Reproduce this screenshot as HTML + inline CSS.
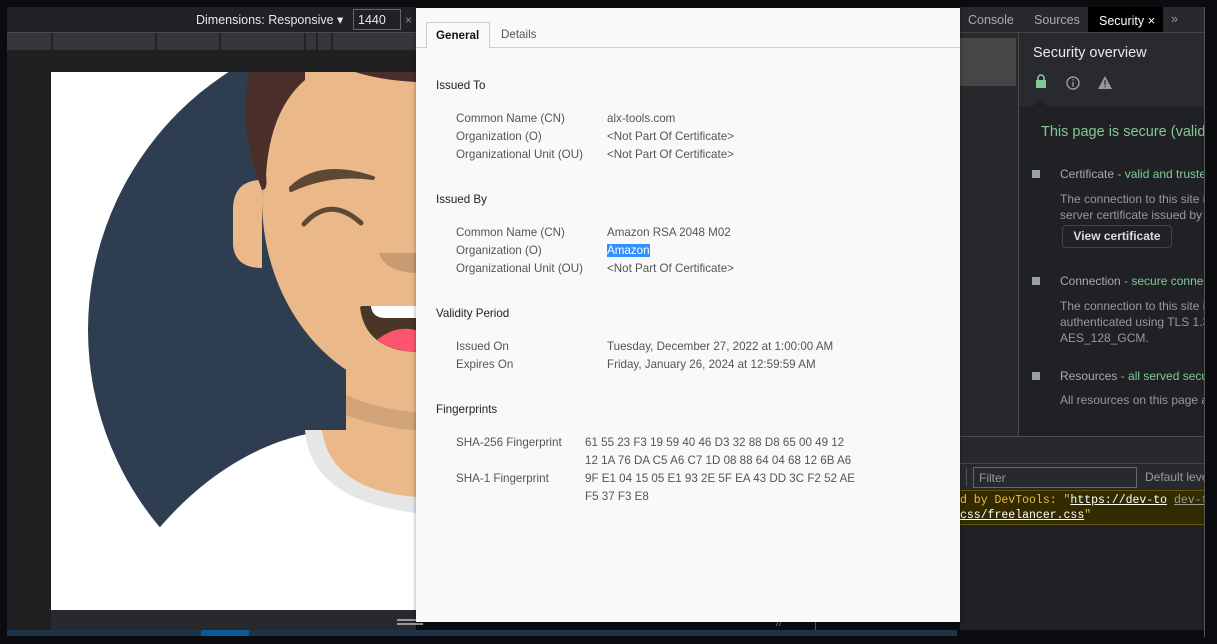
<!DOCTYPE html>
<html><head><meta charset="utf-8"><style>
*{margin:0;padding:0;box-sizing:border-box}
body{width:1217px;height:644px;background:#0a0c10;position:relative;overflow:hidden;font-family:"Liberation Sans",sans-serif}
.a{position:absolute}
.dlg{left:416px;top:8px;width:544px;height:614px;background:#f9f9f9;box-shadow:0 0 4px rgba(0,0,0,.4);font-size:11.6px;color:#555}
.dlg .row{position:absolute;white-space:nowrap}
.h{color:#222}
.sp{font-family:"Liberation Sans",sans-serif;font-size:12.5px}
</style></head><body>
<div class="a" style="left:7px;top:7px;width:409px;height:623px;background:#1f1f21"></div>
<div class="a" style="left:7px;top:7px;width:409px;height:25px;background:#202124"></div>
<div class="a" style="left:196px;top:12px;color:#e8e8e8;font-size:12.5px">Dimensions: Responsive ▾</div>
<div class="a" style="left:353px;top:9px;width:48px;height:21px;border:1px solid #666;background:#202124;color:#e8e8e8;font-size:12.5px;padding:3px 4px">1440</div>
<div class="a" style="left:405px;top:13px;color:#888;font-size:12px">×</div>
<div class="a" style="left:7px;top:32px;width:409px;height:1px;background:#4a4a4c"></div>
<div class="a" style="left:7px;top:33px;width:409px;height:17px;background:#35363a"></div>
<div class="a" style="left:51px;top:33px;width:2px;height:17px;background:#222"></div>
<div class="a" style="left:155px;top:33px;width:2px;height:17px;background:#222"></div>
<div class="a" style="left:219px;top:33px;width:2px;height:17px;background:#222"></div>
<div class="a" style="left:304px;top:33px;width:2px;height:17px;background:#222"></div>
<div class="a" style="left:316px;top:33px;width:2px;height:17px;background:#222"></div>
<div class="a" style="left:331px;top:33px;width:2px;height:17px;background:#222"></div>
<div class="a" style="left:51px;top:610px;width:365px;height:20px;background:#28292c"></div>
<div class="a" style="left:7px;top:630px;width:950px;height:6px;background:#1d3347"></div>
<div class="a" style="left:201px;top:630px;width:48px;height:6px;background:#0e5a98"></div>
<svg class="a" style="left:51px;top:72px" width="365" height="538" viewBox="51 72 365 538">
<rect x="51" y="72" width="365" height="538" fill="#fff"/>
<circle cx="395" cy="330" r="307" fill="#2e3e50"/>
<path d="M110 600 C170 490 260 430 346 430 L416 430 L416 610 L100 610 Z" fill="#fff"/>
<path d="M305 430 Q310 500 416 513 L416 497 Q330 490 322 430 Z" fill="#e6e6e6"/>
<rect x="346" y="370" width="70" height="80" fill="#ebb889"/>
<path d="M322 430 Q330 490 416 497 L416 430 Z" fill="#ebb889"/>
<path d="M346 395 Q380 410 416 412 L416 430 Q380 428 346 415 Z" fill="#d2a479"/>
<ellipse cx="430" cy="200" rx="168" ry="196" fill="#ebb889"/>
<path d="M262 180 Q233 180 233 210 L233 245 Q235 268 262 268 Z" fill="#ebb889"/>
<path d="M305 72 L249 72 Q238 130 262 190 Q268 190 266 175 Q270 110 305 80 Z" fill="#4a2e2a"/>
<path d="M355 72 Q380 80 416 82 L416 72 Z" fill="#4a2e2a"/>
<path d="M291 188 Q320 160 373 178 Q330 172 291 190 Z" fill="#5e4834" stroke="#5e4834" stroke-width="4" stroke-linejoin="round"/>
<path d="M304 224 Q330 195 361 223" fill="none" stroke="#5e4834" stroke-width="5" stroke-linecap="round"/>
<path d="M379 253 Q385 272 416 273 L416 253 Z" fill="#c99b72"/>
<path d="M360 307 Q365 350 416 352 L416 306 L362 306 Z" fill="#4a3626"/>
<path d="M371 307 Q373 318 385 318 L416 318 L416 306 L371 306 Z" fill="#fff"/>
<path d="M377 340 Q395 325 416 330 L416 352 Q390 350 377 340 Z" fill="#fe546d"/>
</svg>
<div class="a" style="left:397px;top:619px;width:26px;height:2px;background:#999"></div>
<div class="a" style="left:397px;top:623px;width:26px;height:2px;background:#999"></div>
<div class="a" style="left:776px;top:617px;color:#777;font-size:11px">//</div>
<div class="a" style="left:815px;top:622px;width:1px;height:8px;background:#555"></div>

<div class="a" style="left:960px;top:7px;width:245px;height:25px;background:#28292c"></div>
<div class="a sp" style="left:968px;top:13px;color:#aaa">Console</div>
<div class="a sp" style="left:1034px;top:13px;color:#aaa">Sources</div>
<div class="a" style="left:1088px;top:7px;width:75px;height:25px;background:#000"></div>
<div class="a sp" style="left:1099px;top:13px;color:#fff">Security <span style="font-size:13px">×</span></div>
<div class="a sp" style="left:1171px;top:12px;color:#999">»</div>
<div class="a" style="left:960px;top:32px;width:245px;height:1px;background:#444"></div>
<div class="a" style="left:960px;top:33px;width:58px;height:404px;background:#28292c"></div>
<div class="a" style="left:960px;top:38px;width:56px;height:48px;background:#464646"></div>
<div class="a" style="left:1018px;top:33px;width:1px;height:404px;background:#4a4a4a"></div>
<div class="a" style="left:1019px;top:33px;width:186px;height:73px;background:#292a2d"></div>
<div class="a" style="left:1019px;top:106px;width:186px;height:331px;background:#202124"></div>
<div class="a" style="left:1033px;top:45px;color:#e8e8e8;font-size:14.5px">Security overview</div>
<svg class="a" style="left:1036px;top:74px" width="80" height="20"><rect x="0" y="6" width="10" height="8" fill="#81c995"/><path d="M2 7 V4 a3 3 0 0 1 6 0 V7" fill="none" stroke="#81c995" stroke-width="1.6"/><circle cx="37" cy="9" r="6" fill="none" stroke="#999" stroke-width="1.4"/><rect x="36.3" y="8" width="1.4" height="4.5" fill="#999"/><rect x="36.3" y="5.2" width="1.4" height="1.4" fill="#999"/><path d="M69 2 L76 15 L62 15 Z" fill="#999"/><rect x="68.4" y="6" width="1.2" height="5" fill="#292a2d"/><rect x="68.4" y="12" width="1.2" height="1.2" fill="#292a2d"/></svg>
<div class="a" style="left:1033px;top:99px;width:0;height:0;border:7px solid transparent;border-bottom-color:#202124;border-top:0"></div>
<div class="a" style="left:1041px;top:124px;color:#81c995;font-size:14.5px;white-space:nowrap">This page is secure (valid</div>
<div class="a" style="left:1032px;top:170px;width:8px;height:8px;background:#9aa0a6"></div>
<div class="a" style="left:1060px;top:167px;font-size:12px;color:#aaa;white-space:nowrap">Certificate - <span style="color:#81c995">valid and truste</span></div>
<div class="a" style="left:1060px;top:191px;font-size:12px;color:#999;line-height:16px;white-space:nowrap">The connection to this site i<br>server certificate issued by A</div>
<div class="a" style="left:1062px;top:225px;width:110px;height:23px;border:1px solid #444;border-radius:4px;color:#ddd;font-size:12px;font-weight:bold;text-align:center;line-height:21px">View certificate</div>
<div class="a" style="left:1032px;top:277px;width:8px;height:8px;background:#9aa0a6"></div>
<div class="a" style="left:1060px;top:274px;font-size:12px;color:#aaa;white-space:nowrap">Connection - <span style="color:#81c995">secure connec</span></div>
<div class="a" style="left:1060px;top:298px;font-size:12px;color:#999;line-height:16px;white-space:nowrap">The connection to this site i<br>authenticated using TLS 1.3<br>AES_128_GCM.</div>
<div class="a" style="left:1032px;top:372px;width:8px;height:8px;background:#9aa0a6"></div>
<div class="a" style="left:1060px;top:369px;font-size:12px;color:#aaa;white-space:nowrap">Resources - <span style="color:#81c995">all served secur</span></div>
<div class="a" style="left:1060px;top:393px;font-size:12px;color:#999;white-space:nowrap">All resources on this page a</div>
<div class="a" style="left:960px;top:436px;width:245px;height:1px;background:#4a4a4a"></div>
<div class="a" style="left:960px;top:437px;width:245px;height:193px;background:#202124"></div>
<div class="a" style="left:960px;top:437px;width:245px;height:26px;background:#28292c"></div>
<div class="a" style="left:960px;top:463px;width:245px;height:1px;background:#444"></div>
<div class="a" style="left:960px;top:464px;width:245px;height:26px;background:#28292c"></div>
<div class="a" style="left:966px;top:468px;width:1px;height:18px;background:#555"></div>
<div class="a" style="left:973px;top:467px;width:164px;height:21px;border:1px solid #666;color:#999;font-size:12px;padding:3px 5px">Filter</div>
<div class="a" style="left:1145px;top:470px;color:#999;font-size:12px;white-space:nowrap">Default leve</div>
<div class="a" style="left:960px;top:490px;width:245px;height:35px;background:#332b00;border-top:1px solid #665500;border-bottom:1px solid #665500"></div>
<div class="a" style="left:960px;top:493px;font-family:'Liberation Mono',monospace;font-size:11.5px;line-height:15px;color:#f2b745;white-space:nowrap">d by DevTools: "<u style="color:#fff">https://dev-to</u> <u style="color:#999">dev-to</u><br><u style="color:#fff">css/freelancer.css</u>"</div>
<div class="a" style="left:1205px;top:0;width:12px;height:644px;background:#0a0c10"></div>
<div class="a" style="left:1204px;top:7px;width:1px;height:630px;background:#555"></div>

<div class="a dlg">
<div class="row" style="left:0;top:39px;width:544px;height:1px;background:#ccc"></div>
<div class="row" style="left:10px;top:14px;width:64px;height:26px;border:1px solid #ccc;border-bottom:none;background:#f9f9f9;color:#111;font-weight:bold;font-size:11.6px;padding:6px 0 0 9px">General</div>
<div class="row" style="left:85px;top:20px">Details</div>
<div class="row h" style="left:20px;top:71px">Issued To</div>
<div class="row" style="left:40px;top:102px;line-height:18px">Common Name (CN)<br>Organization (O)<br>Organizational Unit (OU)</div>
<div class="row" style="left:191px;top:102px;line-height:18px">alx-tools.com<br>&lt;Not Part Of Certificate&gt;<br>&lt;Not Part Of Certificate&gt;</div>
<div class="row h" style="left:20px;top:185px">Issued By</div>
<div class="row" style="left:40px;top:216px;line-height:18px">Common Name (CN)<br>Organization (O)<br>Organizational Unit (OU)</div>
<div class="row" style="left:191px;top:216px;line-height:18px">Amazon RSA 2048 M02<br><span style="background:#3390ff;color:#fff">Amazon</span><br>&lt;Not Part Of Certificate&gt;</div>
<div class="row h" style="left:20px;top:299px">Validity Period</div>
<div class="row" style="left:40px;top:330px;line-height:18px">Issued On<br>Expires On</div>
<div class="row" style="left:191px;top:330px;line-height:18px">Tuesday, December 27, 2022 at 1:00:00 AM<br>Friday, January 26, 2024 at 12:59:59 AM</div>
<div class="row h" style="left:20px;top:395px">Fingerprints</div>
<div class="row" style="left:40px;top:426px;line-height:18px">SHA-256 Fingerprint<br><br>SHA-1 Fingerprint</div>
<div class="row" style="left:169px;top:426px;line-height:18px">61 55 23 F3 19 59 40 46 D3 32 88 D8 65 00 49 12<br>12 1A 76 DA C5 A6 C7 1D 08 88 64 04 68 12 6B A6<br>9F E1 04 15 05 E1 93 2E 5F EA 43 DD 3C F2 52 AE<br>F5 37 F3 E8</div>
</div>
</body></html>
